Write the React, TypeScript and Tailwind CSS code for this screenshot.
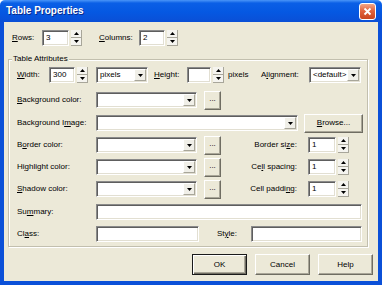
import React from "react";

const sunken =
  "bg-white border border-t-[#8a8a8a] border-l-[#8a8a8a] border-b-white border-r-white shadow-[inset_1px_1px_0_#5e5e5e,inset_-1px_-1px_0_#e2dfd2]";
const raised =
  "bg-[#ECE9D8] border border-t-white border-l-white border-b-[#6f6d62] border-r-[#6f6d62] shadow-[inset_-1px_-1px_0_#a9a698]";

function Tri({ up = false }: { up?: boolean }) {
  return (
    <svg width="5" height="3" viewBox="0 0 5 3">
      <path d={up ? "M0 3h5L2.5 0z" : "M0 0h5L2.5 3z"} fill="#000" />
    </svg>
  );
}

function Input({ w, v = "" }: { w: string; v?: string }) {
  return (
    <div className={`${sunken} h-[16px] ${w} flex items-center pl-[3px] shrink-0`}>{v}</div>
  );
}

function Spin() {
  return (
    <div className="ml-[2px] flex flex-col w-[11px] h-[16px] shrink-0">
      <div className="h-[8px] bg-[#f5f4ef] border-r border-b border-[#a8a69a] flex items-center justify-center">
        <Tri up />
      </div>
      <div className="h-[8px] bg-[#f5f4ef] border-r border-b border-[#a8a69a] flex items-center justify-center">
        <Tri />
      </div>
    </div>
  );
}

function Select({ w, v = "", cls = "" }: { w: string; v?: string; cls?: string }) {
  return (
    <div className={`${sunken} h-[16px] ${w} ${cls} flex items-center justify-between pl-[3px] pr-[1px] shrink-0`}>
      <span>{v}</span>
      <div className="w-[12px] h-[12px] bg-[#f0efe8] border border-t-white border-l-white border-b-[#a8a69a] border-r-[#a8a69a] flex items-center justify-center">
        <Tri />
      </div>
    </div>
  );
}

function Dots() {
  return (
    <div className={`${raised} ml-[7px] w-[17px] h-[19px] flex items-center justify-center shrink-0`}>
      <span className="-mt-[2px]">...</span>
    </div>
  );
}

function U({ c }: { c: string }) {
  return <span className="underline underline-offset-1">{c}</span>;
}

export default function App() {
  return (
    <div className="w-[382px] h-[285px] flex flex-col font-['Liberation_Sans',Arial,sans-serif] text-[8px] leading-[10px] text-black bg-white">
      <div className="h-[22px] shrink-0 flex items-center rounded-t-[5px] bg-[linear-gradient(180deg,#4a95f8_0%,#0a5fe6_14%,#0558e2_55%,#0a4fd6_100%)]">
        <span className="pl-[6px] text-white font-bold text-[10px] [text-shadow:1px_1px_0_#0a2a8a]">
          Table Properties
        </span>
        <div className="ml-auto mr-[6px] w-[17px] h-[17px] rounded-[3px] border border-white bg-[linear-gradient(180deg,#f2a688_0%,#e2643e_45%,#c9451f_100%)] flex items-center justify-center">
          <svg width="9" height="9" viewBox="0 0 9 9">
            <path d="M1.5 1.5L7.5 7.5M7.5 1.5L1.5 7.5" stroke="#fff" strokeWidth="1.8" />
          </svg>
        </div>
      </div>
      <div className="flex-1 flex border-x-4 border-b-4 border-[#0b50d8]">
        <div className="flex-1 bg-[#ECE9D8] flex flex-col">
          {/* Rows / Columns */}
          <div className="mt-[8px] pl-[8px] flex items-center h-[16px]">
            <span className="w-[30px]">
              <U c="R" />ows:
            </span>
            <Input w="w-[27px]" v="3" />
            <Spin />
            <span className="ml-[17px] w-[40px]">
              <U c="C" />olumns:
            </span>
            <Input w="w-[26px]" v="2" />
            <Spin />
          </div>

          {/* Group */}
          <div className="relative mt-[13px] ml-[4px] w-[360px] border border-[#c2bfae] shadow-[inset_1px_1px_0_#fff,1px_1px_0_#fff] pt-[7px] pb-[4px] pl-[8px]">
            <span className="absolute left-[3px] -top-[6px] bg-[#ECE9D8] px-[1px]">Table Attributes</span>

            <div className="flex items-center h-[16px]">
              <span className="w-[32px]">
                <U c="W" />idth:
              </span>
              <Input w="w-[26px]" v="300" />
              <Spin />
              <Select w="w-[52px]" cls="ml-[8px]" v="pixels" />
              <span className="ml-[6px] w-[33px]">
                <U c="H" />eight:
              </span>
              <Input w="w-[24px]" />
              <Spin />
              <span className="ml-[4px] w-[33px]">pixels</span>
              <span className="w-[48px]">
                A<U c="l" />ignment:
              </span>
              <Select w="w-[52px]" v="<default>" />
            </div>

            <div className="mt-[9px] flex items-center h-[16px]">
              <span className="w-[79px]">
                <U c="B" />ackground color:
              </span>
              <Select w="w-[101px]" />
              <Dots />
            </div>

            <div className="mt-[7px] flex items-center h-[16px]">
              <span className="w-[79px]">
                Background I<U c="m" />age:
              </span>
              <Select w="w-[202px]" />
              <div className={`${raised} ml-[6px] w-[59px] h-[19px] flex items-center justify-center shrink-0`}>
                <span>
                  <U c="B" />rowse...
                </span>
              </div>
            </div>

            <div className="mt-[6px] flex items-center h-[16px]">
              <span className="w-[79px]">
                B<U c="o" />rder color:
              </span>
              <Select w="w-[101px]" />
              <Dots />
              <span className="w-[87px] text-right pr-[11px]">
                Border si<U c="z" />e:
              </span>
              <Input w="w-[28px]" v="1" />
              <Spin />
            </div>

            <div className="mt-[6px] flex items-center h-[16px]">
              <span className="w-[79px]">
                Hi<U c="g" />hlight color:
              </span>
              <Select w="w-[101px]" />
              <Dots />
              <span className="w-[87px] text-right pr-[11px]">
                Ce<U c="l" />l spacing:
              </span>
              <Input w="w-[28px]" v="1" />
              <Spin />
            </div>

            <div className="mt-[6px] flex items-center h-[16px]">
              <span className="w-[79px]">
                <U c="S" />hadow color:
              </span>
              <Select w="w-[101px]" />
              <Dots />
              <span className="w-[87px] text-right pr-[11px]">
                Cell paddi<U c="n" />g:
              </span>
              <Input w="w-[28px]" v="1" />
              <Spin />
            </div>

            <div className="mt-[7px] flex items-center h-[16px]">
              <span className="w-[79px]">
                Su<U c="m" />mary:
              </span>
              <Input w="w-[266px]" />
            </div>

            <div className="mt-[6px] flex items-center h-[16px]">
              <span className="w-[79px]">
                Cl<U c="a" />ss:
              </span>
              <Input w="w-[103px]" />
              <span className="ml-[18px] w-[34px]">
                St<U c="y" />le:
              </span>
              <Input w="w-[111px]" />
            </div>
          </div>

          {/* Buttons */}
          <div className="mt-[7px] flex justify-end gap-[8px] pr-[5px]">
            <div className="w-[55px] h-[21px] flex items-center justify-center bg-[#ECE9D8] border border-[#1a1a1a] shadow-[inset_1px_1px_0_#fff,inset_-1px_-1px_0_#6f6d62,inset_-2px_-2px_0_#a9a698]">
              OK
            </div>
            <div className={`${raised} w-[55px] h-[21px] flex items-center justify-center`}>Cancel</div>
            <div className={`${raised} w-[55px] h-[21px] flex items-center justify-center`}>Help</div>
          </div>
        </div>
      </div>
    </div>
  );
}
